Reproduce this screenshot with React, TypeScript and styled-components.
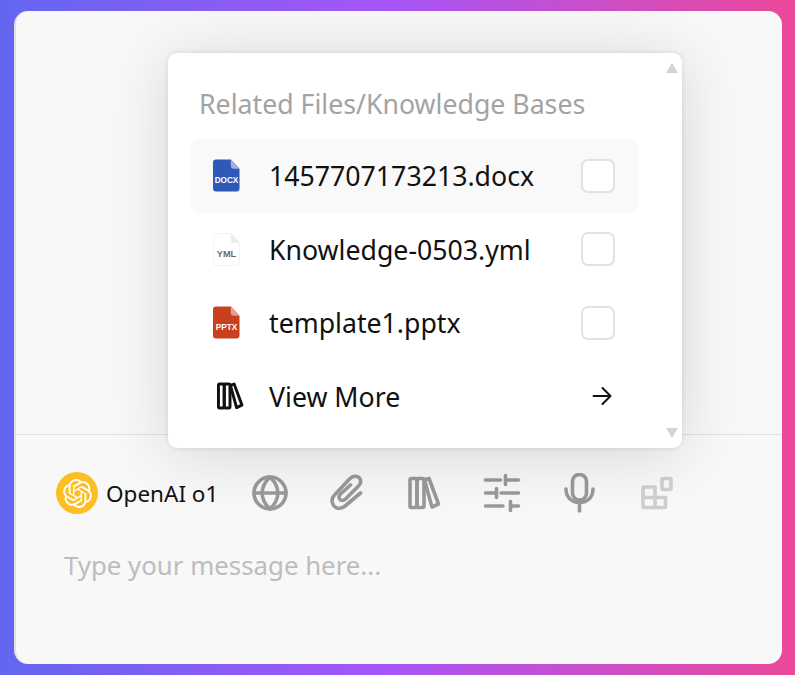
import React from "react";
import styled, { createGlobalStyle } from "styled-components";
import { SiOpenai } from "react-icons/si";

const Global = createGlobalStyle`
  html, body { margin: 0; padding: 0; }
  body { font-family: "Noto Sans", "Liberation Sans", sans-serif; }
`;

const Page = styled.div`
  width: 795px;
  height: 675px;
  box-sizing: border-box;
  padding: 11px 13px 11px 14px;
  background: linear-gradient(90deg, #6366f1 0%, #a855f7 50%, #ec4899 100%);
  overflow: hidden;
`;

const Card = styled.div`
  position: relative;
  height: 653px;
  box-sizing: border-box;
  display: flex;
  flex-direction: column;
  background: #f8f8f8;
  border-left: 2px solid #e0e0e0;
  border-radius: 14px;
  overflow: hidden;
`;

const Upper = styled.div`
  height: 423px;
  flex: none;
  border-bottom: 1px solid #e0e0e0;
`;

const Toolbar = styled.div`
  display: flex;
  align-items: center;
  height: 42px;
  margin-top: 37px;
  padding-left: 40px;
`;

const ModelBadge = styled.div`
  display: flex;
  align-items: center;
  gap: 8px;
  width: 193.5px;
  flex: none;
`;

const ModelLogo = styled.div`
  width: 42px;
  height: 42px;
  flex: none;
  border-radius: 50%;
  background: #fbbf24;
  color: #fff;
  display: flex;
  align-items: center;
  justify-content: center;
`;

const ModelName = styled.span`
  font-size: 22.5px;
  color: #111;
  white-space: nowrap;
`;

const ToolIcons = styled.div`
  display: flex;
  align-items: center;
  gap: 37px;
`;

const ToolIcon = styled.span<{ $faded?: boolean }>`
  width: 40px;
  height: 40px;
  display: flex;
  align-items: center;
  justify-content: center;
  color: ${(p) => (p.$faded ? "#cfcfcf" : "#999")};
`;

const Placeholder = styled.div`
  margin: 33px 0 0 48px;
  font-size: 25.8px;
  line-height: 36px;
  color: #bdbdbd;
`;

const Popup = styled.div`
  position: absolute;
  left: 152px;
  top: 42px;
  width: 514px;
  height: 395px;
  box-sizing: border-box;
  padding: 33px 44px 0 23px;
  background: #fff;
  border-radius: 9px;
  box-shadow: 0 6px 64px rgba(0, 0, 0, 0.14), 0 0 5px rgba(0, 0, 0, 0.1);
`;

const ScrollArrow = styled.span<{ $down?: boolean }>`
  position: absolute;
  right: 4px;
  ${(p) => (p.$down ? "bottom: 10px;" : "top: 10px;")}
  width: 0;
  height: 0;
  border-left: 6.5px solid transparent;
  border-right: 6.5px solid transparent;
  ${(p) =>
    p.$down ? "border-top: 10px solid #d4d4d4;" : "border-bottom: 10px solid #d4d4d4;"}
`;

const Title = styled.div`
  padding-left: 8px;
  margin-bottom: 17px;
  font-size: 26.7px;
  line-height: 36px;
  color: #a3a3a3;
  white-space: nowrap;
`;

const Row = styled.div<{ $active?: boolean }>`
  display: flex;
  align-items: center;
  height: 73.5px;
  box-sizing: border-box;
  padding: 0 23px 0 21px;
  border-radius: 9px;
  background: ${(p) => (p.$active ? "#f9f9f9" : "transparent")};
`;

const RowIcon = styled.span<{ $nudge?: boolean }>`
  width: 28px;
  height: 34px;
  flex: none;
  margin-left: ${(p) => (p.$nudge ? "3.5px" : "0")};
  margin-right: ${(p) => (p.$nudge ? "25.5px" : "29px")};
  display: flex;
  align-items: center;
  justify-content: center;
`;

const RowLabel = styled.span`
  flex: 1;
  font-size: 26.7px;
  color: #111;
  white-space: nowrap;
`;

const Check = styled.span`
  width: 34px;
  height: 34px;
  box-sizing: border-box;
  flex: none;
  background: #fff;
  border: 2px solid #e2e2e2;
  border-radius: 7px;
`;

const ArrowSlot = styled.span`
  width: 34px;
  box-sizing: border-box;
  padding-left: 8px;
  display: flex;
  justify-content: center;
  color: #111;
`;

const FileIcon = ({
  color,
  fold,
  label,
  labelColor = "#fff",
  outline,
}: {
  color: string;
  fold: string;
  label: string;
  labelColor?: string;
  outline?: boolean;
}) => (
  <svg width="27" height="33" viewBox="0 0 28 34">
    <path
      d="M3 .5h15.5L27.5 10v20.5a3 3 0 0 1-3 3H3a3 3 0 0 1-3-3v-27a3 3 0 0 1 3-3z"
      fill={color}
      stroke={outline ? "#f1f1f1" : "none"}
    />
    <path d="M18.5.5L27.5 10h-6a3 3 0 0 1-3-3z" fill={fold} />
    <text
      x="14"
      y="25"
      textAnchor="middle"
      fontFamily="'Liberation Sans', sans-serif"
      fontWeight={700}
      fontSize={outline ? 9.5 : 8.5}
      fill={labelColor}
    >
      {label}
    </text>
  </svg>
);

const LibraryShape = () => (
  <>
    <rect x="6" y="5.500" width="7" height="29" rx="1.500" />
    <rect x="13" y="5.500" width="7" height="29" rx="1.500" />
    <path d="M20.500 7L25 5.500L34.500 31L28 34Z" />
  </>
);

const ToolSvg = styled.svg.attrs({ width: 40, height: 40, fill: "none", stroke: "currentColor" })`
  stroke-width: 3.6;
  stroke-linecap: round;
  stroke-linejoin: round;
`;

const Globe = () => (
  <ToolSvg viewBox="0 0 40 40">
    <circle cx="20" cy="20" r="16" />
    <path d="M4 20h32" />
    <path d="M20 4c-10.500 10-10.500 22 0 32M20 4c10.500 10 10.500 22 0 32" />
  </ToolSvg>
);

const Clip = () => (
  <ToolSvg viewBox="4.500 5 40 40">
    <path d="M38 25L22 38.500C17 42 11 40 10 35C9 32 10 29 12 27L27 11C30 8 34 7 37 10C39 13 38 16 36 18L23 31C21 33 18 33 17 31C16 29 17 27 18 26L28 17" />
  </ToolSvg>
);

const Library = () => (
  <ToolSvg viewBox="0 0 40 40">
    <LibraryShape />
  </ToolSvg>
);

const Sliders = () => (
  <ToolSvg viewBox="0 0 40 40">
    <path d="M4.500 7h15M24.500 7h13M24.500 2.500v9" />
    <path d="M4.500 20h11M20 20h17.500M15.500 15.500v9" />
    <path d="M4.500 33h17.500M29.500 33h8M29.500 28.500v9" />
  </ToolSvg>
);

const Mic = () => (
  <ToolSvg viewBox="0 0 40 40">
    <rect x="14.500" y="1.500" width="14" height="25.500" rx="7" />
    <path d="M8 16c0 8 5.500 13.500 13.500 13.500S35 24 35 16M21.500 29.500V38" />
  </ToolSvg>
);

const Blocks = () => (
  <ToolSvg viewBox="0 0 40 40">
    <path d="M8 15a1 1 0 0 1 1-1h11v10.500h10.500v9a1 1 0 0 1-1 1H9a1 1 0 0 1-1-1zM8 24.500h12.500M20 24.500v10" />
    <rect x="27" y="5.500" width="9" height="11" rx="1.500" />
  </ToolSvg>
);

const ViewMoreIcon = () => (
  <svg width="28" height="28" viewBox="3 3 34 34" fill="none" stroke="#111" strokeWidth="3.6" strokeLinejoin="round">
    <LibraryShape />
  </svg>
);

const Arrow = () => (
  <svg width="20" height="20" viewBox="0 0 20 20" fill="none" stroke="currentColor" strokeWidth="2" strokeLinecap="round" strokeLinejoin="round">
    <path d="M1.500 10h17M10.500 2l8 8-8 8" />
  </svg>
);

export default function App() {
  return (
    <Page>
      <Global />
      <Card>
        <Upper />
        <Toolbar>
          <ModelBadge>
            <ModelLogo>
              <SiOpenai size={29} />
            </ModelLogo>
            <ModelName>OpenAI o1</ModelName>
          </ModelBadge>
          <ToolIcons>
            <ToolIcon><Globe /></ToolIcon>
            <ToolIcon><Clip /></ToolIcon>
            <ToolIcon><Library /></ToolIcon>
            <ToolIcon><Sliders /></ToolIcon>
            <ToolIcon><Mic /></ToolIcon>
            <ToolIcon $faded><Blocks /></ToolIcon>
          </ToolIcons>
        </Toolbar>
        <Placeholder>Type your message here...</Placeholder>
        <Popup>
          <ScrollArrow />
          <Title>Related Files/Knowledge Bases</Title>
          <Row $active>
            <RowIcon><FileIcon color="#2f59b8" fold="#9db2de" label="DOCX" /></RowIcon>
            <RowLabel>1457707173213.docx</RowLabel>
            <Check />
          </Row>
          <Row>
            <RowIcon><FileIcon color="#fff" fold="#ececec" label="YML" labelColor="#6b6b6b" outline /></RowIcon>
            <RowLabel>Knowledge-0503.yml</RowLabel>
            <Check />
          </Row>
          <Row>
            <RowIcon><FileIcon color="#c8411f" fold="#e2a08f" label="PPTX" /></RowIcon>
            <RowLabel>template1.pptx</RowLabel>
            <Check />
          </Row>
          <Row>
            <RowIcon $nudge><ViewMoreIcon /></RowIcon>
            <RowLabel>View More</RowLabel>
            <ArrowSlot><Arrow /></ArrowSlot>
          </Row>
          <ScrollArrow $down />
        </Popup>
      </Card>
    </Page>
  );
}
